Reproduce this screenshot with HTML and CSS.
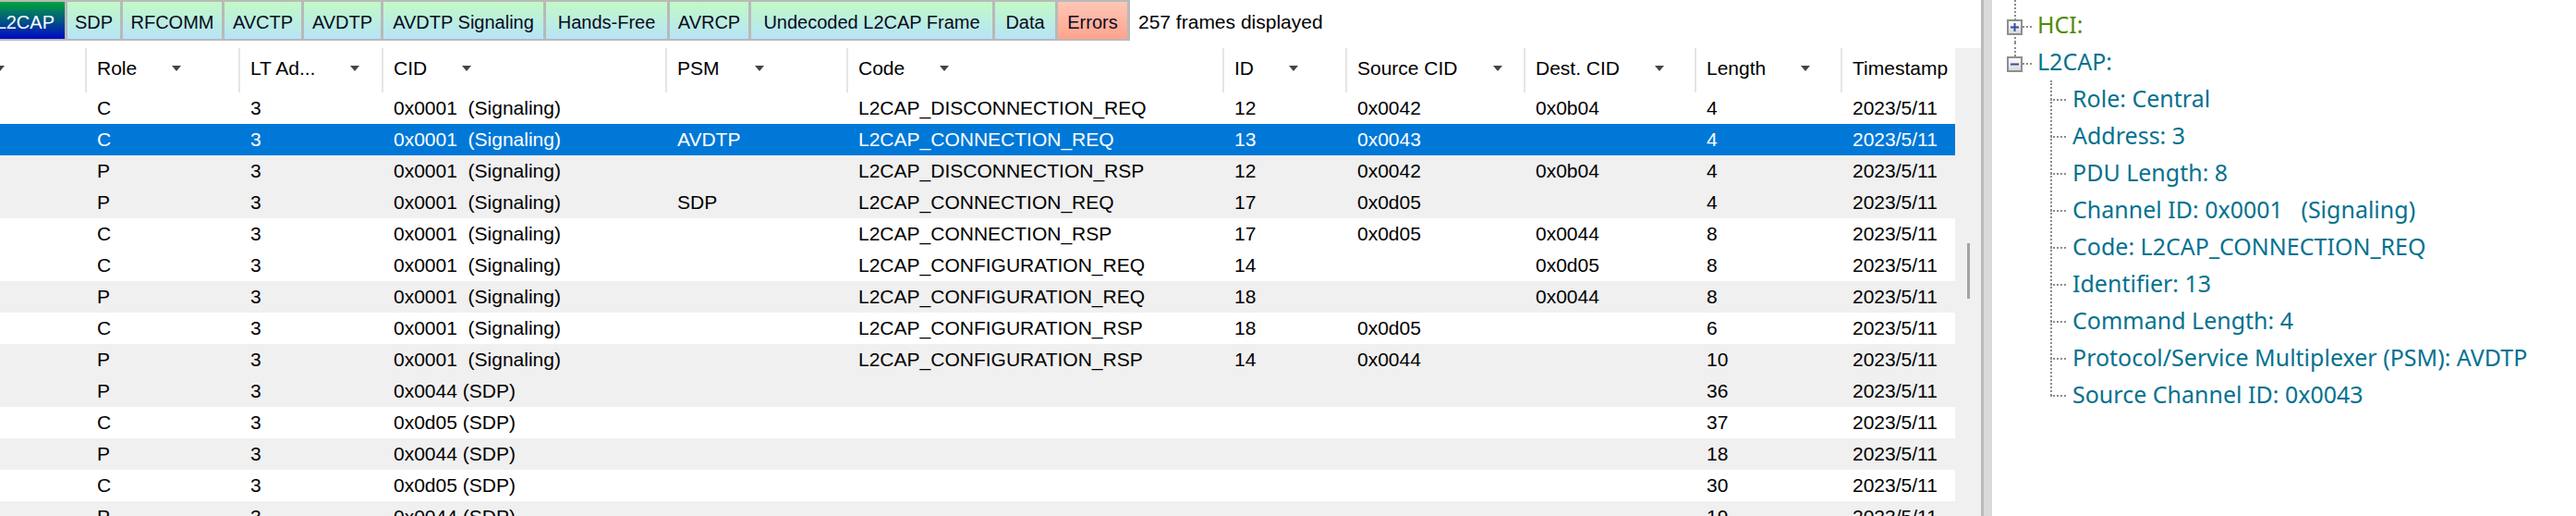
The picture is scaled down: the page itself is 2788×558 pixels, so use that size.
FILE: index.html
```html
<!DOCTYPE html>
<html>
<head>
<meta charset="utf-8">
<link rel="stylesheet" href="styles.css">
</head>
<body>
<div class="app">
  <div class="left">
    <div class="topbar">
      <div class="tabs">
        <div class="tab sel">L2CAP</div>
        <div class="tab">SDP</div>
        <div class="tab">RFCOMM</div>
        <div class="tab">AVCTP</div>
        <div class="tab">AVDTP</div>
        <div class="tab">AVDTP Signaling</div>
        <div class="tab">Hands-Free</div>
        <div class="tab">AVRCP</div>
        <div class="tab">Undecoded L2CAP Frame</div>
        <div class="tab">Data</div>
        <div class="tab err">Errors</div>
      </div>
      <span class="status">257 frames displayed</span>
    </div>
    <div class="listarea">
      <div class="grid">
        <div class="row head">
          <span><i class="arrow"></i></span>
          <span>Role<i class="arrow"></i></span>
          <span>LT Ad...<i class="arrow"></i></span>
          <span>CID<i class="arrow"></i></span>
          <span>PSM<i class="arrow"></i></span>
          <span>Code<i class="arrow"></i></span>
          <span>ID<i class="arrow"></i></span>
          <span>Source CID<i class="arrow"></i></span>
          <span>Dest. CID<i class="arrow"></i></span>
          <span>Length<i class="arrow"></i></span>
          <span>Timestamp<i class="arrow"></i></span>
        </div>
        <div class="row"><span></span><span>C</span><span>3</span><span>0x0001  (Signaling)</span><span></span><span>L2CAP_DISCONNECTION_REQ</span><span>12</span><span>0x0042</span><span>0x0b04</span><span>4</span><span>2023/5/11</span></div>
        <div class="row sel"><span></span><span>C</span><span>3</span><span>0x0001  (Signaling)</span><span>AVDTP</span><span>L2CAP_CONNECTION_REQ</span><span>13</span><span>0x0043</span><span></span><span>4</span><span>2023/5/11</span></div>
        <div class="row alt"><span></span><span>P</span><span>3</span><span>0x0001  (Signaling)</span><span></span><span>L2CAP_DISCONNECTION_RSP</span><span>12</span><span>0x0042</span><span>0x0b04</span><span>4</span><span>2023/5/11</span></div>
        <div class="row alt"><span></span><span>P</span><span>3</span><span>0x0001  (Signaling)</span><span>SDP</span><span>L2CAP_CONNECTION_REQ</span><span>17</span><span>0x0d05</span><span></span><span>4</span><span>2023/5/11</span></div>
        <div class="row"><span></span><span>C</span><span>3</span><span>0x0001  (Signaling)</span><span></span><span>L2CAP_CONNECTION_RSP</span><span>17</span><span>0x0d05</span><span>0x0044</span><span>8</span><span>2023/5/11</span></div>
        <div class="row"><span></span><span>C</span><span>3</span><span>0x0001  (Signaling)</span><span></span><span>L2CAP_CONFIGURATION_REQ</span><span>14</span><span></span><span>0x0d05</span><span>8</span><span>2023/5/11</span></div>
        <div class="row alt"><span></span><span>P</span><span>3</span><span>0x0001  (Signaling)</span><span></span><span>L2CAP_CONFIGURATION_REQ</span><span>18</span><span></span><span>0x0044</span><span>8</span><span>2023/5/11</span></div>
        <div class="row"><span></span><span>C</span><span>3</span><span>0x0001  (Signaling)</span><span></span><span>L2CAP_CONFIGURATION_RSP</span><span>18</span><span>0x0d05</span><span></span><span>6</span><span>2023/5/11</span></div>
        <div class="row alt"><span></span><span>P</span><span>3</span><span>0x0001  (Signaling)</span><span></span><span>L2CAP_CONFIGURATION_RSP</span><span>14</span><span>0x0044</span><span></span><span>10</span><span>2023/5/11</span></div>
        <div class="row alt"><span></span><span>P</span><span>3</span><span>0x0044 (SDP)</span><span></span><span></span><span></span><span></span><span></span><span>36</span><span>2023/5/11</span></div>
        <div class="row"><span></span><span>C</span><span>3</span><span>0x0d05 (SDP)</span><span></span><span></span><span></span><span></span><span></span><span>37</span><span>2023/5/11</span></div>
        <div class="row alt"><span></span><span>P</span><span>3</span><span>0x0044 (SDP)</span><span></span><span></span><span></span><span></span><span></span><span>18</span><span>2023/5/11</span></div>
        <div class="row"><span></span><span>C</span><span>3</span><span>0x0d05 (SDP)</span><span></span><span></span><span></span><span></span><span></span><span>30</span><span>2023/5/11</span></div>
        <div class="row alt"><span></span><span>P</span><span>3</span><span>0x0044 (SDP)</span><span></span><span></span><span></span><span></span><span></span><span>19</span><span>2023/5/11</span></div>
      </div>
      <div class="vscroll"><div class="thumb"></div></div>
    </div>
  </div>
  <div class="splitter"></div>
  <div class="tree">
    <div class="trow root-through">
      <svg class="box" width="17" height="17" viewBox="0 0 17 17"><defs><linearGradient id="bg1" x1="0" y1="0" x2="0" y2="1"><stop offset="0" stop-color="#ffffff"/><stop offset="1" stop-color="#d6d6d6"/></linearGradient></defs><rect x="1" y="1" width="15" height="15" fill="url(#bg1)" stroke="#8e8e8e" stroke-width="2"/><path d="M4 8.5h9M8.5 4v9" stroke="#2d4f9e" stroke-width="2"/></svg>
      <span class="hd"></span><span class="lbl hci">HCI:</span>
    </div>
    <div class="trow root-top">
      <svg class="box" width="17" height="17" viewBox="0 0 17 17"><defs><linearGradient id="bg2" x1="0" y1="0" x2="0" y2="1"><stop offset="0" stop-color="#ffffff"/><stop offset="1" stop-color="#d6d6d6"/></linearGradient></defs><rect x="1" y="1" width="15" height="15" fill="url(#bg2)" stroke="#8e8e8e" stroke-width="2"/><path d="M4 8.5h9" stroke="#2d4f9e" stroke-width="2"/></svg>
      <span class="hd"></span><span class="lbl">L2CAP:</span>
    </div>
    <div class="kids">
      <div class="trow leaf"><span class="hd"></span><span class="lbl">Role: Central</span></div>
      <div class="trow leaf"><span class="hd"></span><span class="lbl">Address: 3</span></div>
      <div class="trow leaf"><span class="hd"></span><span class="lbl">PDU Length: 8</span></div>
      <div class="trow leaf"><span class="hd"></span><span class="lbl">Channel ID: 0x0001   (Signaling)</span></div>
      <div class="trow leaf"><span class="hd"></span><span class="lbl">Code: L2CAP_CONNECTION_REQ</span></div>
      <div class="trow leaf"><span class="hd"></span><span class="lbl">Identifier: 13</span></div>
      <div class="trow leaf"><span class="hd"></span><span class="lbl">Command Length: 4</span></div>
      <div class="trow leaf"><span class="hd"></span><span class="lbl">Protocol/Service Multiplexer (PSM): AVDTP</span></div>
      <div class="trow leaf"><span class="hd"></span><span class="lbl">Source Channel ID: 0x0043</span></div>
    </div>
  </div>
</div>
</body>
</html>
```

FILE: styles.css
```css
* { box-sizing: border-box; margin: 0; padding: 0; }
html, body { background: #fff; }
body {
  margin: 0;
  width: 2788px;
  height: 558px;
  overflow: hidden;
  font-family: "Liberation Sans", Arial, sans-serif;
  color: #000;
}
.app { display: flex; height: 558px; }

/* left pane */
.left { width: 2144px; flex: none; display: flex; flex-direction: column; overflow: hidden; }
.topbar { height: 44px; flex: none; display: flex; align-items: stretch; }
.tabs {
  display: grid;
  grid-template-columns: 73px 60px 110px 86px 86px 176px 134px 88px 264px 68px 78px;
  border-top: 2px solid #b9b9b9;
  border-bottom: 2px solid #b9b9b9;
}
.tab {
  display: flex;
  align-items: center;
  justify-content: center;
  padding-top: 4px;
  border-right: 3px solid #b9b9b9;
  font-size: 20px;
  white-space: nowrap;
  overflow: hidden;
  background: linear-gradient(#c2f9c6, #b6e4f7);
  color: #0a0a20;
}
.tab.sel {
  background: linear-gradient(#00a43c, #0008c8);
  color: #fff;
  justify-content: flex-end;
  padding-right: 11px;
}
.tab.err { background: linear-gradient(#ffc6b6, #ffa48c); }
.status { display: flex; align-items: center; padding: 3px 0 0 9px; font-size: 21px; color: #000; white-space: nowrap; }

.listarea { margin-top: 8px; flex: 1; display: flex; overflow: hidden; }
.grid { width: 2116px; flex: none; overflow: hidden; }
.row {
  display: grid;
  grid-template-columns: 92px 166px 155px 307px 196px 407px 133px 193px 185px 158px 200px;
  height: 34px;
  font-size: 21px;
  align-items: center;
  white-space: pre;
}
.row > span { padding-left: 13px; overflow: hidden; }
.row.alt { background: #f0f0f0; }
.row.sel { background: #0078d7; color: #fff; }
.row.head { height: 48px; align-items: stretch; }
.row.head > span {
  display: flex;
  align-items: center;
  padding: 0 0 5px 11px;
  border-left: 2px solid #e5e5e5;
}
.row.head > span:first-child { border-left: 0; padding-left: 0; }
.arrow {
  display: block;
  flex: none;
  width: 0;
  height: 0;
  border-left: 5px solid transparent;
  border-right: 5px solid transparent;
  border-top: 6px solid #444;
  margin-left: 38px;
}
.row.head > span:first-child .arrow { margin-left: -5px; }

.vscroll { width: 28px; flex: none; background: #f0f0f0; }
.thumb { width: 3px; height: 60px; margin: 211px 0 0 13px; background: #a4a4a4; }

.splitter { width: 12px; flex: none; background: #dadada; border-left: 3px solid #bababa; }

/* tree pane */
.tree {
  flex: 1;
  padding-top: 6px;
  font-family: "Noto Sans", "Open Sans", sans-serif;
  font-size: 25px;
  color: #04718f;
}
.trow { position: relative; height: 40px; display: flex; align-items: center; white-space: pre; }
.box { flex: none; margin: 6px 0 0 16px; position: relative; z-index: 1; }
.hd { flex: none; width: 10px; height: 0; border-top: 2px dotted #8c8c8c; margin-top: 6px; }
.lbl { margin-left: 6px; }
.hci { color: #4f8a00; }
.root-through::before {
  content: "";
  position: absolute;
  left: 24px;
  top: -6px;
  bottom: 0;
  border-left: 2px dotted #8c8c8c;
}
.root-top::before {
  content: "";
  position: absolute;
  left: 24px;
  top: 0;
  height: 15px;
  border-left: 2px dotted #8c8c8c;
}
.kids { position: relative; }
.kids::before {
  content: "";
  position: absolute;
  left: 63px;
  top: 1px;
  bottom: 18px;
  border-left: 2px dotted #8c8c8c;
}
.leaf { padding-left: 63px; }
.leaf .hd { width: 17px; margin-top: 4px; }
.leaf .lbl { margin-left: 7px; }
```
